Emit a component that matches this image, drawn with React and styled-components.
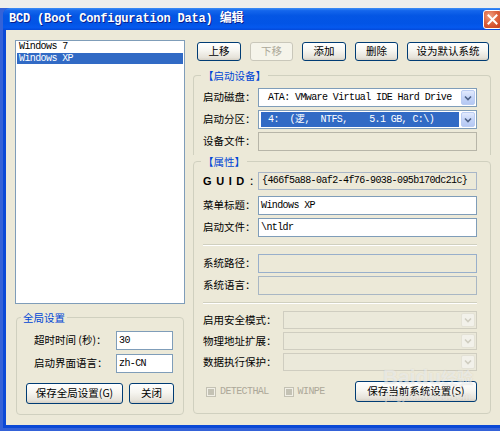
import React from 'react';
import styled, { createGlobalStyle } from 'styled-components';

const cjk = `"Noto Sans CJK SC", "Noto Sans", sans-serif`;
const mono = `"Liberation Mono", "DejaVu Sans Mono", monospace`;

const GlobalStyle = createGlobalStyle`
  html, body { margin: 0; padding: 0; }
  body {
    width: 500px;
    height: 431px;
    overflow: hidden;
    background: linear-gradient(#EEEEEC 0, #EEEEEC 8px, #3462D8 8px);
  }
`;

const Window = styled.div`
  position: relative;
  margin: 8px 0 0 3px;
  width: 506px;
  height: 420px;
  border-radius: 7px 7px 0 0;
  background: #0B49D6;
  display: flex;
  flex-direction: column;
  overflow: hidden;
`;

const TitleBar = styled.div`
  height: 22px;
  flex: none;
  display: flex;
  align-items: center;
  padding: 0 7px 0 6px;
  background: linear-gradient(
    #3D8DF5 0%,
    #1466EC 12%,
    #0456E4 35%,
    #0254E6 70%,
    #0559EE 88%,
    #0449DA 100%
  );
`;

const Title = styled.div`
  flex: 1;
  color: #fff;
  font: bold 12px/1 ${mono}, "Noto Sans CJK SC", monospace;
  letter-spacing: -0.18px;
  text-shadow: 1px 1px 0 #0A1E8C;
  white-space: pre;
`;

const CloseButton = styled.div`
  width: 19px;
  height: 19px;
  box-sizing: border-box;
  border: 1px solid #fff;
  border-radius: 3px;
  background: radial-gradient(circle at 35% 30%, #F0A184 0%, #DD6440 45%, #C4391A 100%);
  display: flex;
  align-items: center;
  justify-content: center;
`;

const Body = styled.div`
  flex: 1;
  margin: 0 3px 3px 3px;
  background: #ECE9D8;
  display: grid;
  grid-template-columns: 170px 298px;
  column-gap: 8px;
  align-content: start;
  padding: 10px 0 0 9px;
  overflow: hidden;
`;

const Column = styled.div`
  display: flex;
  flex-direction: column;
  padding-top: ${(p) => p.$top || 0}px;
`;

const ListBox = styled.div`
  height: 264px;
  box-sizing: border-box;
  background: #fff;
  border: 1px solid #7F9DB9;
  padding: 0 1px;
`;

const ListItem = styled.div`
  height: 11.5px;
  padding-left: 2px;
  font: 10px/11.5px ${mono};
  letter-spacing: -0.6px;
  white-space: pre;
  color: ${(p) => (p.$selected ? '#fff' : '#000')};
  background: ${(p) => (p.$selected ? '#316AC5' : 'transparent')};
`;

/* Group box; the legend is placed from the padding edge, so its offset
   is given relative to that */
const Group = styled.fieldset`
  margin: ${(p) => p.$mt || 0}px ${(p) => p.$mx || 0}px 0;
  min-inline-size: 0;
  border: 1px solid #D0D0BF;
  border-radius: ${(p) => (p.$open ? '4px 4px 0 0' : '4px')};
  ${(p) => p.$open && 'border-bottom: none;'}
  padding: ${(p) => p.$pad};
  display: flex;
  flex-direction: column;
`;

const Legend = styled.legend`
  margin-left: ${(p) => p.$ml || 0}px;
  padding: 0 2px;
  font: 10.5px/13px ${cjk};
  color: #0046D5;
`;

const Row = styled.div`
  display: grid;
  grid-template-columns: ${(p) => p.$label}px ${(p) => (p.$field ? `${p.$field}px` : '1fr')};
  align-items: center;
  margin-top: ${(p) => p.$mt || 0}px;
`;

const Label = styled.span`
  font: 10.5px/1 ${cjk};
  color: #000;
  white-space: nowrap;
`;

const GuidLabel = styled.span`
  font: bold 11px/1 "Liberation Sans", Arial, sans-serif;
  letter-spacing: 4.6px;
  color: #000;
  white-space: nowrap;
  & > b {
    font: 10.5px/1 ${cjk};
    letter-spacing: 0;
  }
`;

const Field = styled.div`
  height: ${(p) => p.$h || 19}px;
  box-sizing: border-box;
  border: 1px solid ${(p) => p.$border || '#7F9DB9'};
  background: ${(p) => p.$bg || '#fff'};
  display: flex;
  align-items: center;
  padding-left: ${(p) => p.$pl ?? 2}px;
  font: 10px/1 ${mono};
  letter-spacing: -0.6px;
  color: #000;
  white-space: pre;
  overflow: hidden;
`;

const Combo = styled.div`
  height: ${(p) => p.$h || 19}px;
  box-sizing: border-box;
  border: 1px solid ${(p) => (p.$disabled ? '#CFCDC0' : '#7F9DB9')};
  background: ${(p) => (p.$disabled ? '#EBE9DA' : '#fff')};
  display: flex;
  align-items: stretch;
  padding: 1px;
  gap: 2px;
`;

const ComboText = styled.div`
  flex: 1;
  display: flex;
  align-items: center;
  padding-left: 7px;
  margin-left: 1px;
  font: 10px/1 ${mono};
  letter-spacing: -0.6px;
  white-space: pre;
  color: ${(p) => (p.$selected ? '#fff' : '#000')};
  background: ${(p) => (p.$selected ? '#316AC5' : 'transparent')};
`;

const DropButton = styled.div`
  width: 14px;
  flex: none;
  box-sizing: border-box;
  border: 1px solid ${(p) => (p.$disabled ? '#E4E2D6' : '#BACCF2')};
  border-radius: 2px;
  background: ${(p) =>
    p.$disabled
      ? '#F2F1EA'
      : 'linear-gradient(#E2EAFD, #C5D5F8 50%, #B5C8F3)'};
  display: flex;
  align-items: center;
  justify-content: center;
`;

const Separator = styled.div`
  height: 1px;
  background: #D0D0BF;
  border-bottom: 1px solid #fff;
  margin-top: ${(p) => p.$mt || 0}px;
`;

const ButtonBar = styled.div`
  display: flex;
  gap: ${(p) => p.$gap ?? 9}px;
  margin-left: ${(p) => p.$ml || 0}px;
  margin-top: ${(p) => p.$mt || 0}px;
  align-items: center;
`;

const Button = styled.button`
  width: ${(p) => p.$w}px;
  height: ${(p) => p.$h || 19}px;
  margin: 0;
  padding: 0;
  box-sizing: border-box;
  border: 1px solid ${(p) => (p.disabled ? '#C9C7BA' : '#003C74')};
  border-radius: 3px;
  background: ${(p) =>
    p.disabled ? '#F5F4EA' : 'linear-gradient(#FFFFFF 0%, #F6F5F0 45%, #E6E3DA 85%, #D6D0C5 100%)'};
  font: 10.5px/1 ${cjk};
  color: ${(p) => (p.disabled ? '#ACA899' : '#000')};
  white-space: nowrap;
  margin-left: ${(p) => (p.$push ? 'auto' : '0')};
`;

const Check = styled.label`
  display: flex;
  align-items: center;
  gap: 4px;
  margin-left: ${(p) => p.$ml || 0}px;
  font: 10px/1 ${mono};
  letter-spacing: -0.6px;
  color: #ACA899;
`;

const CheckBox = styled.span`
  width: 10px;
  height: 10px;
  box-sizing: border-box;
  border: 1px solid #C3C1B3;
  background: #F1EFE6;
  display: flex;
  align-items: center;
  justify-content: center;
  &::after {
    content: '';
    width: 6px;
    height: 6px;
    background: #C4C2B4;
  }
`;

const Watermark = styled.div`
  position: absolute;
  left: 380px;
  top: 358px;
  display: flex;
  flex-direction: column;
  align-items: center;
  pointer-events: none;
  color: rgba(255, 255, 255, 0.55);
  text-shadow: 0 0 1px rgba(120, 120, 110, 0.25);
`;

const MarkBig = styled.span`
  font: bold 21px/1 "Liberation Sans", Arial, sans-serif;
  & > i {
    font: bold 16px/1 ${cjk};
    font-style: normal;
  }
`;

const MarkSmall = styled.span`
  margin-top: 5px;
  font: 10px/1 "Liberation Sans", Arial, sans-serif;
  letter-spacing: 0.3px;
`;

const Chevron = ({ color }) => (
  <svg width="8" height="6" viewBox="0 0 8 6">
    <polyline points="1,1.5 4,4.5 7,1.5" fill="none" stroke={color} strokeWidth="1.6" />
  </svg>
);

const ComboBox = ({ children, selected, disabled, h }) => (
  <Combo $disabled={disabled} $h={h}>
    <ComboText $selected={selected}>{children}</ComboText>
    <DropButton $disabled={disabled}>
      <Chevron color={disabled ? '#CFCDC0' : '#4D6185'} />
    </DropButton>
  </Combo>
);

export default function App() {
  return (
    <>
      <GlobalStyle />
      <Window>
        <TitleBar>
          <Title>BCD (Boot Configuration Data) 编辑</Title>
          <CloseButton>
            <svg width="11" height="11" viewBox="0 0 11 11">
              <path d="M1.5 1.5 L9.5 9.5 M9.5 1.5 L1.5 9.5" stroke="#fff" strokeWidth="2" strokeLinecap="square" />
            </svg>
          </CloseButton>
        </TitleBar>
        <Body>
          <Column>
            <ListBox>
              <ListItem>Windows 7</ListItem>
              <ListItem $selected>Windows XP</ListItem>
            </ListBox>
            <Group $mt={7} $mx={1} $pad="7px 0 10px 17px">
              <Legend $ml={-13}>全局设置</Legend>
              <Row $label={82} $field={57}>
                <Label>超时时间 (秒)：</Label>
                <Field>30</Field>
              </Row>
              <Row $label={82} $field={57} $mt={4}>
                <Label>启动界面语言：</Label>
                <Field>zh-CN</Field>
              </Row>
              <ButtonBar $gap={6} $ml={-8} $mt={10}>
                <Button $w={97} $h={21}>保存全局设置(G)</Button>
                <Button $w={45} $h={21}>关闭</Button>
              </ButtonBar>
            </Group>
          </Column>

          <Column $top={2}>
            <ButtonBar $ml={4}>
              <Button $w={44}>上移</Button>
              <Button $w={43} disabled>下移</Button>
              <Button $w={44}>添加</Button>
              <Button $w={43}>删除</Button>
              <Button $w={82}>设为默认系统</Button>
            </ButtonBar>

            <Group $mt={8} $open $pad="6px 13px 4px 9px">
              <Legend $ml={-2}>【启动设备】</Legend>
              <Row $label={55}>
                <Label>启动磁盘：</Label>
                <ComboBox>ATA: VMware Virtual IDE Hard Drive</ComboBox>
              </Row>
              <Row $label={55} $mt={3}>
                <Label>启动分区：</Label>
                <ComboBox selected>{'4:  (逻,  NTFS,    5.1 GB, C:\\)'}</ComboBox>
              </Row>
              <Row $label={55} $mt={3}>
                <Label>设备文件：</Label>
                <Field $bg="#ECE9D8" $border="#B7B5A8" />
              </Row>
            </Group>

            <Group $pad="4px 13px 11px 9px">
              <Legend $ml={-2}>【属性】</Legend>
              <Row $label={55}>
                <GuidLabel>GUID<b>：</b></GuidLabel>
                <Field $h={18} $bg="#ECE9D8" $border="#A8B6C8" $pl={3}>
                  {'{466f5a88-0af2-4f76-9038-095b170dc21c}'}
                </Field>
              </Row>
              <Row $label={55} $mt={6}>
                <Label>菜单标题：</Label>
                <Field>Windows XP</Field>
              </Row>
              <Row $label={55} $mt={3}>
                <Label>启动文件：</Label>
                <Field>{'\\ntldr'}</Field>
              </Row>
              <Separator $mt={7} />
              <Row $label={55} $mt={8}>
                <Label>系统路径：</Label>
                <Field $bg="#ECE9D8" $border="#98AFCB" />
              </Row>
              <Row $label={55} $mt={3}>
                <Label>系统语言：</Label>
                <Field $bg="#ECE9D8" $border="#A9B7C4" />
              </Row>
              <Separator $mt={7} />
              <Row $label={80} $mt={7}>
                <Label>启用安全模式：</Label>
                <ComboBox disabled h={18} />
              </Row>
              <Row $label={80} $mt={3}>
                <Label>物理地址扩展：</Label>
                <ComboBox disabled h={18} />
              </Row>
              <Row $label={80} $mt={3}>
                <Label>数据执行保护：</Label>
                <ComboBox disabled h={18} />
              </Row>
              <ButtonBar $mt={10} $gap={0}>
                <Check $ml={3}>
                  <CheckBox />
                  DETECTHAL
                </Check>
                <Check $ml={15}>
                  <CheckBox />
                  WINPE
                </Check>
                <Button $w={122} $h={21} $push>保存当前系统设置(S)</Button>
              </ButtonBar>
            </Group>
          </Column>
        </Body>
        <Watermark>
          <MarkBig>Baidu<i>经验</i></MarkBig>
          <MarkSmall>jingyan.baidu.com</MarkSmall>
        </Watermark>
      </Window>
    </>
  );
}
